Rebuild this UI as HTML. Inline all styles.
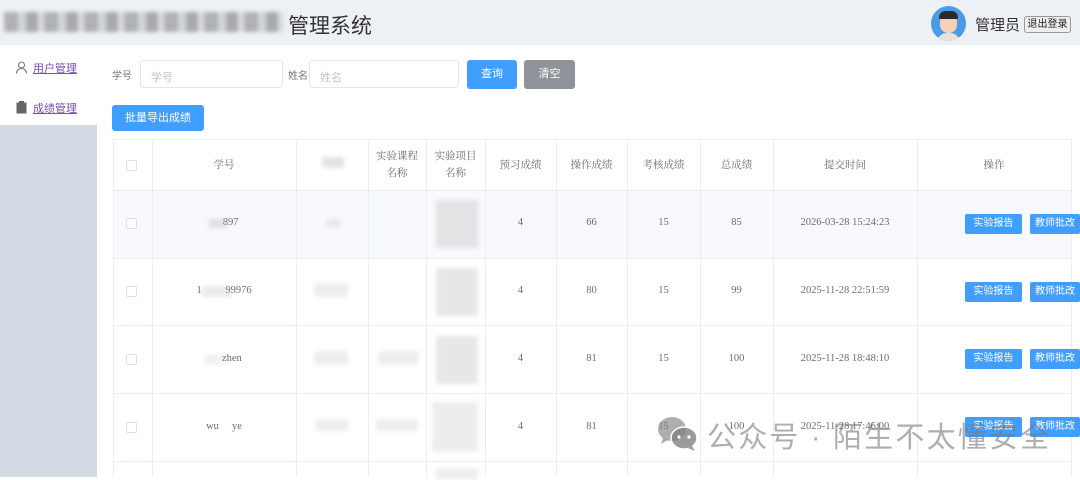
<!DOCTYPE html>
<html><head><meta charset="utf-8"><style>
*{margin:0;padding:0;box-sizing:border-box}
body{width:1080px;height:477px;overflow:hidden;background:#fff;position:relative;font-family:"Liberation Serif","Noto Serif CJK SC",serif;color:#6a6c70}
.a{position:absolute}
.hdr{left:0;top:0;width:1080px;height:45px;background:#edf0f5}
.side{left:0;top:45px;width:97px;height:432px;background:#fff}
.sideg{left:0;top:125px;width:97px;height:352px;background:#d4dae4}
.blur{filter:blur(2px);background:#bbb}
.inp{border:1px solid #e3e5ea;border-radius:3px;height:28px;background:#fff;font-size:11px;color:#c0c4cc;padding:8px 10px;font-family:"Liberation Sans","Noto Sans CJK SC",sans-serif}
.btn{background:#409eff;color:#fff;border-radius:3px;font-size:11px;text-align:center;font-family:"Liberation Sans","Noto Sans CJK SC",sans-serif}
.vl{width:1px;background:#ebeef5;top:139px;height:338px}
.hl{height:1px;background:#ebeef5;left:113px;width:959px}
.c{font-size:10.5px;text-align:center;color:#6a6c70}
.cb{width:11px;height:11px;border:1px solid #dcdfe6;border-radius:2px;background:#fff}
.ob{height:20px;font-size:10px;line-height:20px;border-radius:2px}
</style></head><body>
<div class="a hdr"></div>
<div class="a" style="left:4px;top:12px;width:280px;height:20px;filter:blur(2px);opacity:.75;background:repeating-linear-gradient(90deg,#9a9ca2 0 14px,#c9cbd0 14px 22px,#8f9197 22px 34px,#d5d7db 34px 40px)"></div>
<div class="a" style="left:288px;top:10px;font-size:21px;color:#333;font-family:'Liberation Sans','Noto Sans CJK SC',sans-serif">管理系统</div>
<div class="a" style="left:931px;top:6px;width:35px;height:35px;border-radius:50%;background:#4a9be8;overflow:hidden">
 <div class="a" style="left:9px;top:8px;width:17px;height:19px;border-radius:8px;background:#f4d2b3"></div>
 <div class="a" style="left:8px;top:5px;width:19px;height:8px;border-radius:8px 8px 2px 2px;background:#2b2b2b"></div>
 <div class="a" style="left:6px;top:27px;width:23px;height:12px;border-radius:10px 10px 0 0;background:#e8e2da"></div>
</div>
<div class="a" style="left:975px;top:14px;font-size:15px;color:#333;font-family:'Liberation Sans','Noto Sans CJK SC',sans-serif">管理员</div>
<div class="a" style="left:1024px;top:16px;width:47px;height:17px;border:1px solid #999;border-radius:3px;background:#eee;font-size:10px;line-height:15px;text-align:center;color:#222;font-family:'Liberation Sans','Noto Sans CJK SC',sans-serif">退出登录</div>

<div class="a side"></div><div class="a sideg"></div>
<svg class="a" style="left:15px;top:61px" width="13" height="13" viewBox="0 0 13 13"><circle cx="6.5" cy="4" r="3" fill="none" stroke="#777" stroke-width="1.1"/><path d="M1.5 12.5c0-3 2.2-5 5-5s5 2 5 5" fill="none" stroke="#777" stroke-width="1.1"/></svg>
<div class="a" style="left:33px;top:60px;font-size:11px;color:#7a4fa8;text-decoration:underline;font-family:'Liberation Sans','Noto Sans CJK SC',sans-serif">用户管理</div>
<svg class="a" style="left:16px;top:101px" width="11" height="13" viewBox="0 0 11 13"><rect x="0.5" y="1.5" width="10" height="11" fill="#666"/><rect x="3" y="0" width="5" height="3" fill="#666"/></svg>
<div class="a" style="left:33px;top:100px;font-size:11px;color:#7a4fa8;text-decoration:underline;font-family:'Liberation Sans','Noto Sans CJK SC',sans-serif">成绩管理</div>

<div class="a" style="left:112px;top:67px;font-size:10px;color:#777;font-family:'Liberation Sans','Noto Sans CJK SC',sans-serif">学号</div>
<div class="a inp" style="left:140px;top:60px;width:143px">学号</div>
<div class="a" style="left:288px;top:67px;font-size:10px;color:#777;font-family:'Liberation Sans','Noto Sans CJK SC',sans-serif">姓名</div>
<div class="a inp" style="left:309px;top:60px;width:150px">姓名</div>
<div class="a btn" style="left:467px;top:60px;width:50px;height:29px;line-height:29px">查询</div>
<div class="a btn" style="left:524px;top:60px;width:51px;height:29px;line-height:29px;background:#909399">清空</div>
<div class="a btn" style="left:112px;top:105px;width:92px;height:26px;line-height:26px">批量导出成绩</div>

<!-- table -->
<div class="a" style="left:113px;top:190px;width:959px;height:68px;background:#f7f9fc"></div>
<div class="a hl" style="top:139px"></div>
<div class="a hl" style="top:190px"></div>
<div class="a hl" style="top:258px"></div>
<div class="a hl" style="top:325px"></div>
<div class="a hl" style="top:393px"></div>
<div class="a hl" style="top:461px"></div>
<div class="a vl" style="left:113px"></div><div class="a vl" style="left:152px"></div><div class="a vl" style="left:296px"></div><div class="a vl" style="left:368px"></div><div class="a vl" style="left:426px"></div><div class="a vl" style="left:485px"></div><div class="a vl" style="left:556px"></div><div class="a vl" style="left:627px"></div><div class="a vl" style="left:700px"></div><div class="a vl" style="left:773px"></div><div class="a vl" style="left:917px"></div><div class="a vl" style="left:1071px"></div>

<div class="a cb" style="left:126px;top:160px"></div>
<div class="a c" style="left:152px;top:157px;width:144px">学号</div>
<div class="a blur" style="left:322px;top:157px;width:22px;height:11px;opacity:.4"></div>
<div class="a c" style="left:368px;top:148px;width:58px;line-height:17px">实验课程<br>名称</div>
<div class="a c" style="left:426px;top:148px;width:59px;line-height:17px">实验项目<br>名称</div>
<div class="a c" style="left:485px;top:157px;width:71px">预习成绩</div>
<div class="a c" style="left:556px;top:157px;width:71px">操作成绩</div>
<div class="a c" style="left:627px;top:157px;width:73px">考核成绩</div>
<div class="a c" style="left:700px;top:157px;width:73px">总成绩</div>
<div class="a c" style="left:773px;top:157px;width:144px">提交时间</div>
<div class="a c" style="left:917px;top:157px;width:154px">操作</div>

<!-- rows -->
<div class="a cb" style="left:126px;top:218px"></div>
<div class="a c" style="left:152px;top:217px;width:144px">&nbsp;&nbsp;&nbsp;&nbsp;&nbsp;897</div>
<div class="a blur" style="left:209px;top:219px;width:18px;height:9px;opacity:.4"></div>
<div class="a blur" style="left:327px;top:219px;width:14px;height:8px;opacity:.3"></div>
<div class="a blur" style="left:436px;top:200px;width:42px;height:48px;opacity:.35"></div>
<div class="a c" style="left:485px;top:217px;width:71px">4</div>
<div class="a c" style="left:556px;top:217px;width:71px">66</div>
<div class="a c" style="left:627px;top:217px;width:73px">15</div>
<div class="a c" style="left:700px;top:217px;width:73px">85</div>
<div class="a c" style="left:773px;top:217px;width:144px">2026-03-28 15:24:23</div>
<div class="a btn ob" style="left:965px;top:214px;width:57px">实验报告</div>
<div class="a btn ob" style="left:1030px;top:214px;width:50px">教师批改</div>

<div class="a cb" style="left:126px;top:286px"></div>
<div class="a c" style="left:152px;top:285px;width:144px">1&nbsp;&nbsp;&nbsp;&nbsp;&nbsp;&nbsp;&nbsp;&nbsp;&nbsp;99976</div>
<div class="a blur" style="left:202px;top:286px;width:30px;height:11px;opacity:.3"></div>
<div class="a blur" style="left:314px;top:283px;width:34px;height:14px;opacity:.25"></div>
<div class="a blur" style="left:436px;top:268px;width:42px;height:48px;opacity:.35"></div>
<div class="a c" style="left:485px;top:285px;width:71px">4</div>
<div class="a c" style="left:556px;top:285px;width:71px">80</div>
<div class="a c" style="left:627px;top:285px;width:73px">15</div>
<div class="a c" style="left:700px;top:285px;width:73px">99</div>
<div class="a c" style="left:773px;top:285px;width:144px">2025-11-28 22:51:59</div>
<div class="a btn ob" style="left:965px;top:282px;width:57px">实验报告</div>
<div class="a btn ob" style="left:1030px;top:282px;width:50px">教师批改</div>

<div class="a cb" style="left:126px;top:354px"></div>
<div class="a c" style="left:152px;top:353px;width:144px">&nbsp;&nbsp;&nbsp;&nbsp;&nbsp;&nbsp;zhen</div>
<div class="a blur" style="left:204px;top:354px;width:22px;height:11px;opacity:.2"></div>
<div class="a blur" style="left:314px;top:351px;width:34px;height:14px;opacity:.25"></div>
<div class="a blur" style="left:378px;top:351px;width:40px;height:14px;opacity:.25"></div>
<div class="a blur" style="left:436px;top:336px;width:42px;height:48px;opacity:.35"></div>
<div class="a c" style="left:485px;top:353px;width:71px">4</div>
<div class="a c" style="left:556px;top:353px;width:71px">81</div>
<div class="a c" style="left:627px;top:353px;width:73px">15</div>
<div class="a c" style="left:700px;top:353px;width:73px">100</div>
<div class="a c" style="left:773px;top:353px;width:144px">2025-11-28 18:48:10</div>
<div class="a btn ob" style="left:965px;top:349px;width:57px">实验报告</div>
<div class="a btn ob" style="left:1030px;top:349px;width:50px">教师批改</div>

<div class="a cb" style="left:126px;top:422px"></div>
<div class="a c" style="left:152px;top:421px;width:144px">wu&nbsp;&nbsp;&nbsp;&nbsp;&nbsp;ye</div>
<div class="a blur" style="left:316px;top:419px;width:32px;height:12px;opacity:.25"></div>
<div class="a blur" style="left:376px;top:419px;width:42px;height:12px;opacity:.25"></div>
<div class="a blur" style="left:432px;top:402px;width:46px;height:50px;opacity:.25"></div>
<div class="a c" style="left:485px;top:421px;width:71px">4</div>
<div class="a c" style="left:556px;top:421px;width:71px">81</div>
<div class="a c" style="left:627px;top:421px;width:73px">15</div>
<div class="a c" style="left:700px;top:421px;width:73px">100</div>
<div class="a c" style="left:773px;top:421px;width:144px">2025-11-28 17:46:00</div>
<div class="a btn ob" style="left:965px;top:417px;width:57px">实验报告</div>
<div class="a btn ob" style="left:1030px;top:417px;width:50px">教师批改</div>
<div class="a blur" style="left:436px;top:468px;width:42px;height:12px;opacity:.25"></div>

<!-- watermark -->
<svg class="a" style="left:657px;top:416px" width="42" height="36" viewBox="0 0 42 36"><ellipse cx="15" cy="13" rx="14" ry="12" fill="rgba(130,130,130,.65)"/><path d="M6 22l-2 6 7-4z" fill="rgba(130,130,130,.65)"/><ellipse cx="27" cy="22" rx="13" ry="11" fill="rgba(130,130,130,.8)" stroke="#fff" stroke-width="1.5"/><path d="M35 30l3 5-7-3z" fill="rgba(130,130,130,.8)"/><circle cx="22" cy="21" r="1.6" fill="#fff"/><circle cx="32" cy="21" r="1.6" fill="#fff"/></svg>
<div class="a" style="left:707px;top:414px;font-size:29px;color:rgba(120,120,120,.6);font-family:'Liberation Sans','Noto Sans CJK SC',sans-serif;letter-spacing:2.2px;white-space:nowrap">公众号 · 陌生不太懂安全</div>
</body></html>
